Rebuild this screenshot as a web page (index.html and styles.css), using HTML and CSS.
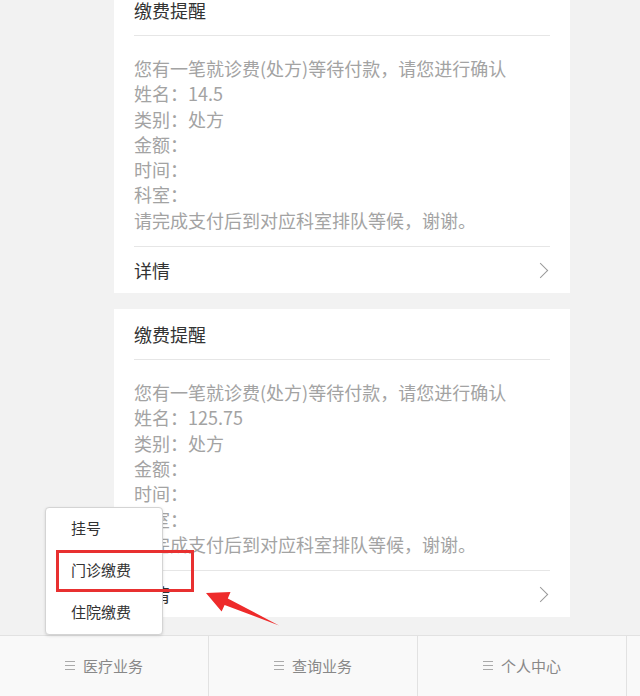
FILE: index.html
```html
<!DOCTYPE html>
<html lang="zh-CN">

<head>
    <meta charset="UTF-8">
    <meta name="viewport" content="width=device-width, initial-scale=1.0">
    <title>缴费提醒</title>
    <link rel="stylesheet" href="styles.css">
</head>

<body>
    <div class="msg-list">
        <div class="msg-card">
            <div class="msg-title">缴费提醒</div>
            <div class="msg-body">
                <p>您有一笔就诊费(处方)等待付款，请您进行确认</p>
                <p>姓名：14.5</p>
                <p>类别：处方</p>
                <p>金额：</p>
                <p>时间：</p>
                <p>科室：</p>
                <p>请完成支付后到对应科室排队等候，谢谢。</p>
            </div>
            <div class="msg-foot">
                <span>详情</span>
                <span class="chevron"></span>
            </div>
        </div>

        <div class="msg-card">
            <div class="msg-title">缴费提醒</div>
            <div class="msg-body">
                <p>您有一笔就诊费(处方)等待付款，请您进行确认</p>
                <p>姓名：125.75</p>
                <p>类别：处方</p>
                <p>金额：</p>
                <p>时间：</p>
                <p>科室：</p>
                <p>请完成支付后到对应科室排队等候，谢谢。</p>
            </div>
            <div class="msg-foot">
                <span>详情</span>
                <span class="chevron"></span>
            </div>
        </div>
    </div>

    <div class="tab-bar">
        <div class="tab-item"><span class="menu-icon"></span>医疗业务</div>
        <div class="tab-item"><span class="menu-icon"></span>查询业务</div>
        <div class="tab-item"><span class="menu-icon"></span>个人中心</div>
        <div class="tab-item"></div>
    </div>

    <!-- popup menu opened from 医疗业务 -->
    <div class="sub-menu">
        <div class="sub-item">挂号</div>
        <div class="sub-item">门诊缴费</div>
        <div class="sub-item">住院缴费</div>
    </div>

    <div class="mark-box"></div>
    <svg class="mark-arrow" width="100" height="50" viewBox="200 585 100 50">
        <polygon points="206,593 230.5,592 227.8,598.4 279,625.5 224.6,605 221.6,611.5" fill="#ee2b2b" />
    </svg>
</body>

</html>
```

FILE: styles.css
```css
body {
    margin: 0;
    background-color: #f2f2f2;
    font-family: "Microsoft YaHei", "Noto Sans CJK SC", sans-serif;
    overflow: hidden;
    position: relative;
    height: 696px;
}

.msg-list {
    margin-top: -15px;
    margin-left: 114px;
    width: 456px;
}

.msg-card {
    background-color: white;
    margin-bottom: 16px;
    padding: 0 20px;
}

.msg-title {
    font-size: 18px;
    line-height: 24px;
    color: #333;
    padding: 13px 0;
    border-bottom: 1px solid #e6e6e6;
}

.msg-body {
    padding: 20px 0 13px;
    border-bottom: 1px solid #e6e6e6;
}

.msg-body p {
    margin: 0;
    font-size: 18px;
    line-height: 25.3px;
    color: #a3a3a3;
}

.msg-foot {
    display: flex;
    justify-content: space-between;
    align-items: center;
    font-size: 18px;
    line-height: 24px;
    color: #333;
    padding: 11px 0;
}

.chevron {
    width: 10px;
    height: 10px;
    border-top: 1.5px solid #999;
    border-right: 1.5px solid #999;
    transform: rotate(45deg);
    margin-right: 4px;
}

.tab-bar {
    position: absolute;
    left: 0;
    top: 635px;
    height: 61px;
    display: flex;
    background-color: #f9f9f9;
    border-top: 1px solid #e2e2e2;
    width: 100%;
    overflow: hidden;
}

.tab-item {
    flex: 0 0 208px;
    border-right: 1px solid #e2e2e2;
    display: flex;
    align-items: center;
    justify-content: center;
    gap: 8px;
    font-size: 15px;
    color: #888;
    padding-bottom: 2px;
}

.menu-icon {
    width: 10px;
    height: 7px;
    border-top: 1px solid #aaa;
    border-bottom: 1px solid #aaa;
    position: relative;
}

.menu-icon::after {
    content: "";
    position: absolute;
    left: 0;
    right: 0;
    top: 3px;
    border-top: 1px solid #aaa;
}

.sub-menu {
    position: absolute;
    left: 45px;
    top: 507px;
    width: 116px;
    background-color: white;
    border: 1px solid #d4d4d4;
    border-radius: 4px;
    box-shadow: 0 1px 3px rgba(0, 0, 0, 0.12);
    padding: 0;
}

.sub-item {
    height: 42px;
    line-height: 40px;
    padding-left: 25px;
    font-size: 15px;
    color: #333;
}

.mark-box {
    position: absolute;
    left: 56px;
    top: 550px;
    width: 132px;
    height: 36px;
    border: 3px solid #e83030;
}

.mark-arrow {
    position: absolute;
    left: 200px;
    top: 585px;
}
```
